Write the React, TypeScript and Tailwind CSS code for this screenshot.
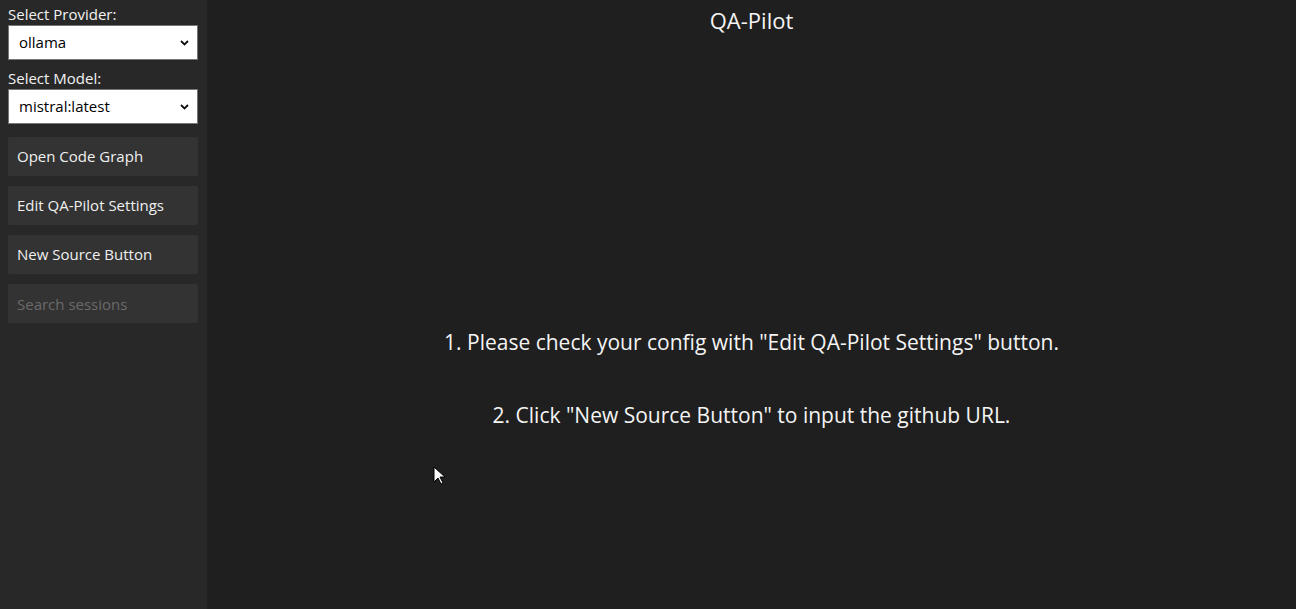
import React from "react";

const ACTIONS = ["Open Code Graph", "Edit QA-Pilot Settings", "New Source Button"];

function Chevron(): JSX.Element {
  return (
    <svg className="pointer-events-none absolute right-[8px] top-1/2 -translate-y-1/2" width="9" height="6" viewBox="0 0 9 6">
      <path d="M1 1l3.5 3.5L8 1" fill="none" stroke="#111" strokeWidth="1.8" />
    </svg>
  );
}

function SelectBox({ label, value }: { label: string; value: string }): JSX.Element {
  return (
    <div className="flex flex-col">
      <label className="text-[15px] leading-[20px] text-[#f2f2f2]">{label}</label>
      <div className="relative mt-[1px] h-[35px] w-[190px] border border-[#767676] bg-white">
        <div className="flex h-full items-center pl-[10px] text-[15px] text-black">{value}</div>
        <Chevron />
      </div>
    </div>
  );
}

export default function App(): JSX.Element {
  return (
    <div className="relative flex h-[609px] w-[1296px] overflow-hidden bg-[#1f1f1f] font-['Open_Sans',sans-serif]">
      <aside className="flex w-[207px] shrink-0 flex-col bg-[#282828] px-[8px] pt-[4px]">
        <SelectBox label="Select Provider:" value="ollama" />
        <div className="mt-[8px]">
          <SelectBox label="Select Model:" value="mistral:latest" />
        </div>
        <div className="mt-[13px] flex flex-col gap-[10px]">
          {ACTIONS.map((a) => (
            <button
              key={a}
              type="button"
              className="flex h-[39px] w-[190px] items-center rounded-[2px] bg-[#333333] pl-[9px] text-left text-[15px] text-[#f0f0f0]"
            >
              {a}
            </button>
          ))}
          <input
            className="h-[39px] w-[190px] rounded-[2px] bg-[#333333] pl-[9px] text-[15px] text-[#f0f0f0] outline-none placeholder:text-[#6a6a6a]"
            placeholder="Search sessions"
          />
        </div>
      </aside>
      <main className="flex flex-1 flex-col items-center text-[#f4f4f4]">
        <h1 className="mt-[5px] text-[22px] leading-[30px]">QA-Pilot</h1>
        <div className="mt-[292px] flex flex-col items-center gap-[42px] text-[21px] leading-[31px]">
          <p>1. Please check your config with "Edit QA-Pilot Settings" button.</p>
          <p>2. Click "New Source Button" to input the github URL.</p>
        </div>
      </main>
      <svg className="absolute left-[433px] top-[466px]" width="12" height="20" viewBox="0 0 12 20">
        <path d="M1 1v15l4-4 3 6 2-1-3-6h5z" fill="#fff" stroke="#000" strokeWidth="1" />
      </svg>
    </div>
  );
}
